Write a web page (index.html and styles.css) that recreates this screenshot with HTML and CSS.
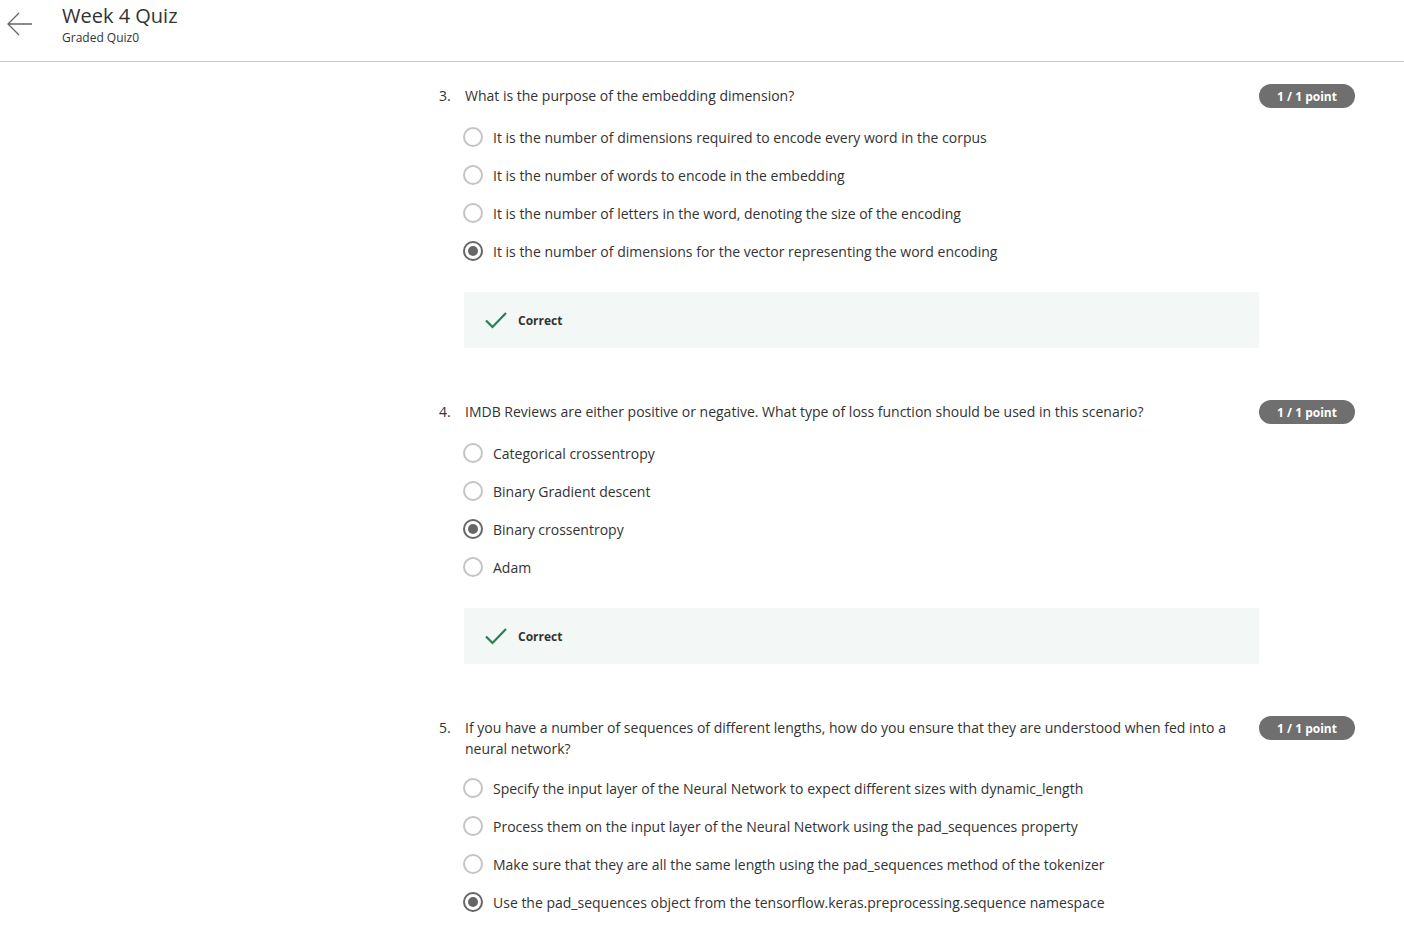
FILE: index.html
```html
<!DOCTYPE html>
<html>
<head>
<meta charset="utf-8">
<link rel="stylesheet" href="styles.css">
</head>
<body>
<header class="top">
  <button class="back" aria-label="Back">
    <svg width="26" height="24" viewBox="0 0 26 24"><path d="M25 12H1M12 1L1 12l11 11" fill="none" stroke="#666" stroke-width="1.3"/></svg>
  </button>
  <div class="titles">
    <div class="title">Week 4 Quiz</div>
    <div class="subtitle">Graded Quiz0</div>
  </div>
</header>
<main class="content">
  <section class="question">
    <div class="num">3.</div>
    <div class="body">
      <div class="prompt">What is the purpose of the embedding dimension?</div>
      <div class="options">
        <div class="opt"><span class="radio"></span><span>It is the number of dimensions required to encode every word in the corpus</span></div>
        <div class="opt"><span class="radio"></span><span>It is the number of words to encode in the embedding</span></div>
        <div class="opt"><span class="radio"></span><span>It is the number of letters in the word, denoting the size of the encoding</span></div>
        <div class="opt"><span class="radio checked"></span><span>It is the number of dimensions for the vector representing the word encoding</span></div>
      </div>
      <div class="feedback"><svg width="24" height="20" viewBox="0 0 24 20"><path d="M2 10.5l6.5 6.5L22 3" fill="none" stroke="#1f8354" stroke-width="2.2"/></svg><span>Correct</span></div>
    </div>
    <div class="badge">1 / 1 point</div>
  </section>
  <section class="question">
    <div class="num">4.</div>
    <div class="body">
      <div class="prompt">IMDB Reviews are either positive or negative. What type of loss function should be used in this scenario?</div>
      <div class="options">
        <div class="opt"><span class="radio"></span><span>Categorical crossentropy</span></div>
        <div class="opt"><span class="radio"></span><span>Binary Gradient descent</span></div>
        <div class="opt"><span class="radio checked"></span><span>Binary crossentropy</span></div>
        <div class="opt"><span class="radio"></span><span>Adam</span></div>
      </div>
      <div class="feedback"><svg width="24" height="20" viewBox="0 0 24 20"><path d="M2 10.5l6.5 6.5L22 3" fill="none" stroke="#1f8354" stroke-width="2.2"/></svg><span>Correct</span></div>
    </div>
    <div class="badge">1 / 1 point</div>
  </section>
  <section class="question">
    <div class="num">5.</div>
    <div class="body">
      <div class="prompt">If you have a number of sequences of different lengths, how do you ensure that they are understood when fed into a neural network?</div>
      <div class="options tight">
        <div class="opt"><span class="radio"></span><span>Specify the input layer of the Neural Network to expect different sizes with dynamic_length</span></div>
        <div class="opt"><span class="radio"></span><span>Process them on the input layer of the Neural Network using the pad_sequences property</span></div>
        <div class="opt"><span class="radio"></span><span>Make sure that they are all the same length using the pad_sequences method of the tokenizer</span></div>
        <div class="opt"><span class="radio checked"></span><span>Use the pad_sequences object from the tensorflow.keras.preprocessing.sequence namespace</span></div>
      </div>
    </div>
    <div class="badge">1 / 1 point</div>
  </section>
</main>
</body>
</html>
```
FILE: styles.css
```css
* { box-sizing: border-box; }
html, body { margin: 0; padding: 0; }
body {
  font-family: "Open Sans", "Noto Sans", sans-serif;
  color: #1f1f1f;
  background: #fff;
  width: 1404px;
  height: 940px;
  overflow: hidden;
}
.top {
  height: 62px;
  border-bottom: 1px solid #c8c8c8;
  display: flex;
  align-items: flex-start;
}
.back {
  border: 0;
  background: none;
  padding: 0;
  margin: 12px 0 0 7px;
  width: 26px;
  height: 24px;
  display: flex;
}
.titles {
  margin-left: 29px;
  padding-top: 2px;
}
.title {
  font-size: 20px;
  line-height: 28px;
  color: #333;
}
.subtitle {
  font-size: 12px;
  line-height: 16px;
  color: #333;
  margin-top: 0;
}
.content {
  padding-left: 439px;
  padding-right: 49px;
}
.question {
  display: flex;
  align-items: flex-start;
}
.question:first-child { padding-top: 23px; }
.question + .question { margin-top: 53px; }
.num {
  width: 26px;
  font-size: 14px;
  line-height: 21px;
  color: #333;
  flex: none;
}
.body {
  flex: 1;
  min-width: 0;
}
.prompt {
  font-size: 14px;
  line-height: 21px;
  color: #333;
  padding-right: 20px;
}
.options {
  padding-top: 12px;
  margin-left: -2px;
}
.options.tight { padding-top: 10px; }
.opt {
  height: 38px;
  display: flex;
  align-items: center;
  gap: 10px;
  font-size: 14px;
  color: #333;
}
.radio {
  width: 20px;
  height: 20px;
  border-radius: 50%;
  border: 2px solid #c4c4c4;
  flex: none;
  display: flex;
  align-items: center;
  justify-content: center;
}
.radio.checked { border-color: #666; }
.radio.checked::after {
  content: "";
  width: 10px;
  height: 10px;
  border-radius: 50%;
  background: #666;
}
.feedback {
  margin-top: 22px;
  margin-left: -1px;
  height: 56px;
  background: #f3f8f6;
  display: flex;
  align-items: center;
  padding-left: 20px;
  gap: 10px;
  font-size: 12px;
  font-weight: 700;
  color: #333;
}
.badge {
  flex: none;
  width: 96px;
  height: 24px;
  margin-top: -1px;
  border-radius: 12px;
  background: #6f6f6f;
  color: #fff;
  font-size: 12px;
  font-weight: 700;
  display: flex;
  align-items: center;
  justify-content: center;
}
```
